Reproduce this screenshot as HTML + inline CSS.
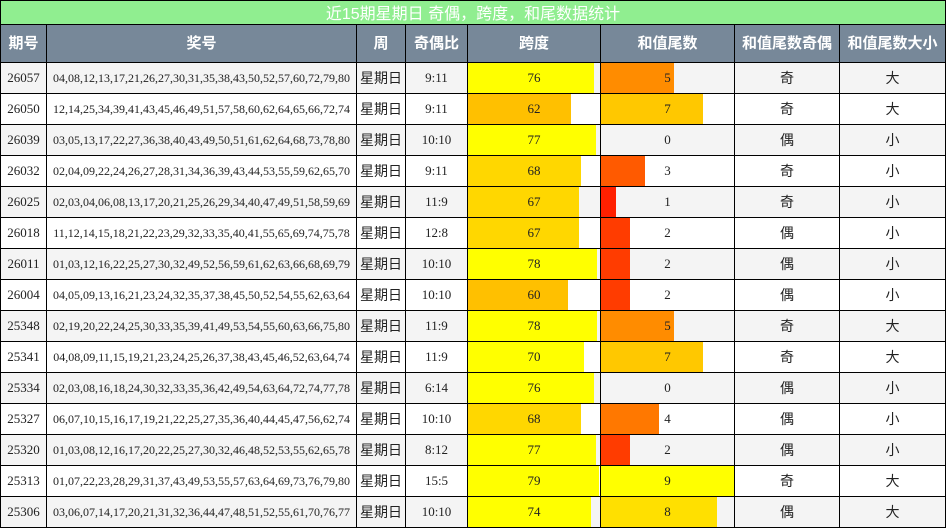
<!DOCTYPE html><html><head><meta charset="utf-8"><style>
*{box-sizing:border-box;margin:0;padding:0}
body{width:946px;height:529px;background:#fff;position:relative;overflow:hidden;font-family:"Liberation Serif","Noto Serif CJK SC",serif}
.t{position:absolute;left:0;top:0;width:946px;height:26px;background:#90ee90;color:#fff;font:16px "Liberation Sans","Noto Sans CJK SC",sans-serif;text-align:center;line-height:28px;border:1px solid #000;border-bottom:2px solid #000}
.r{position:absolute;left:0;width:946px;height:31px;border-bottom:1px solid #000}
.r div{position:absolute;top:0;height:100%;border-left:1px solid #000;text-align:center;line-height:30px;font-size:13px;color:#222;overflow:hidden;white-space:nowrap}
.r .c2{font-size:12px}
.h{background:#778899;height:38px;top:25px}
.h div{color:#fff;font:bold 15px "Liberation Sans","Noto Sans CJK SC",sans-serif;line-height:38px}
.c1{left:0;width:46px}.c2{left:46px;width:310px}.c3{left:356px;width:49px}.c4{left:405px;width:62px}.c5{left:467px;width:133px}.c6{left:600px;width:134px}.c7{left:734px;width:105px}.c8{left:839px;width:107px;border-right:1px solid #000}
.r .cj{font:14px "Liberation Sans","Noto Sans CJK SC",sans-serif;line-height:30px}
.r div span{position:absolute;left:0;top:0;height:100%;border:none}
.r div b{position:relative;font-weight:normal}
.o{background:#f4f4f4}
</style></head><body>
<div class="t">近15期星期日 奇偶，跨度，和尾数据统计</div>
<div class="r h"><div class="c1">期号</div><div class="c2" style="font-size:15px">奖号</div><div class="c3">周</div><div class="c4">奇偶比</div><div class="c5">跨度</div><div class="c6">和值尾数</div><div class="c7">和值尾数奇偶</div><div class="c8">和值尾数大小</div></div>
<div id="rows"></div>
<script>
var d=[["26057","04,08,12,13,17,21,26,27,30,31,35,38,43,50,52,57,60,72,79,80","9:11",76,5,"奇","大"],
["26050","12,14,25,34,39,41,43,45,46,49,51,57,58,60,62,64,65,66,72,74","9:11",62,7,"奇","大"],
["26039","03,05,13,17,22,27,36,38,40,43,49,50,51,61,62,64,68,73,78,80","10:10",77,0,"偶","小"],
["26032","02,04,09,22,24,26,27,28,31,34,36,39,43,44,53,55,59,62,65,70","9:11",68,3,"奇","小"],
["26025","02,03,04,06,08,13,17,20,21,25,26,29,34,40,47,49,51,58,59,69","11:9",67,1,"奇","小"],
["26018","11,12,14,15,18,21,22,23,29,32,33,35,40,41,55,65,69,74,75,78","12:8",67,2,"偶","小"],
["26011","01,03,12,16,22,25,27,30,32,49,52,56,59,61,62,63,66,68,69,79","10:10",78,2,"偶","小"],
["26004","04,05,09,13,16,21,23,24,32,35,37,38,45,50,52,54,55,62,63,64","10:10",60,2,"偶","小"],
["25348","02,19,20,22,24,25,30,33,35,39,41,49,53,54,55,60,63,66,75,80","11:9",78,5,"奇","大"],
["25341","04,08,09,11,15,19,21,23,24,25,26,37,38,43,45,46,52,63,64,74","11:9",70,7,"奇","大"],
["25334","02,03,08,16,18,24,30,32,33,35,36,42,49,54,63,64,72,74,77,78","6:14",76,0,"偶","小"],
["25327","06,07,10,15,16,17,19,21,22,25,27,35,36,40,44,45,47,56,62,74","10:10",68,4,"偶","小"],
["25320","01,03,08,12,16,17,20,22,25,27,30,32,46,48,52,53,55,62,65,78","8:12",77,2,"偶","小"],
["25313","01,07,22,23,28,29,31,37,43,49,53,55,57,63,64,69,73,76,79,80","15:5",79,9,"奇","大"],
["25306","03,06,07,14,17,20,21,31,32,36,44,47,48,51,52,55,61,70,76,77","10:10",74,8,"偶","大"]];
var tc=["#fff","#ff2000","#ff3c00","#ff5a00","#ff7800","#ff8c00","#ffa800","#ffc800","#ffe000","#ffff00"];
var h="";
d.forEach(function(r,i){
var sc=r[3]>=70?"#ffff00":(r[3]>=65?"#ffd700":"#ffc000");
var sw=Math.round(r[3]*1.66);var tw=r[4]==9?133:Math.round(r[4]*14.5);
h+='<div class="r'+(i%2==0?' o':'')+'" style="top:'+(63+31*i)+'px"><div class="c1">'+r[0]+'</div><div class="c2">'+r[1]+'</div><div class="c3 cj">星期日</div><div class="c4">'+r[2]+'</div><div class="c5"><span style="width:'+sw+'px;background:'+sc+'"></span><b>'+r[3]+'</b></div><div class="c6"><span style="width:'+tw+'px;background:'+tc[r[4]]+'"></span><b>'+r[4]+'</b></div><div class="c7 cj">'+r[5]+'</div><div class="c8 cj">'+r[6]+'</div></div>';});
document.getElementById("rows").innerHTML=h;
</script>
</body></html>
